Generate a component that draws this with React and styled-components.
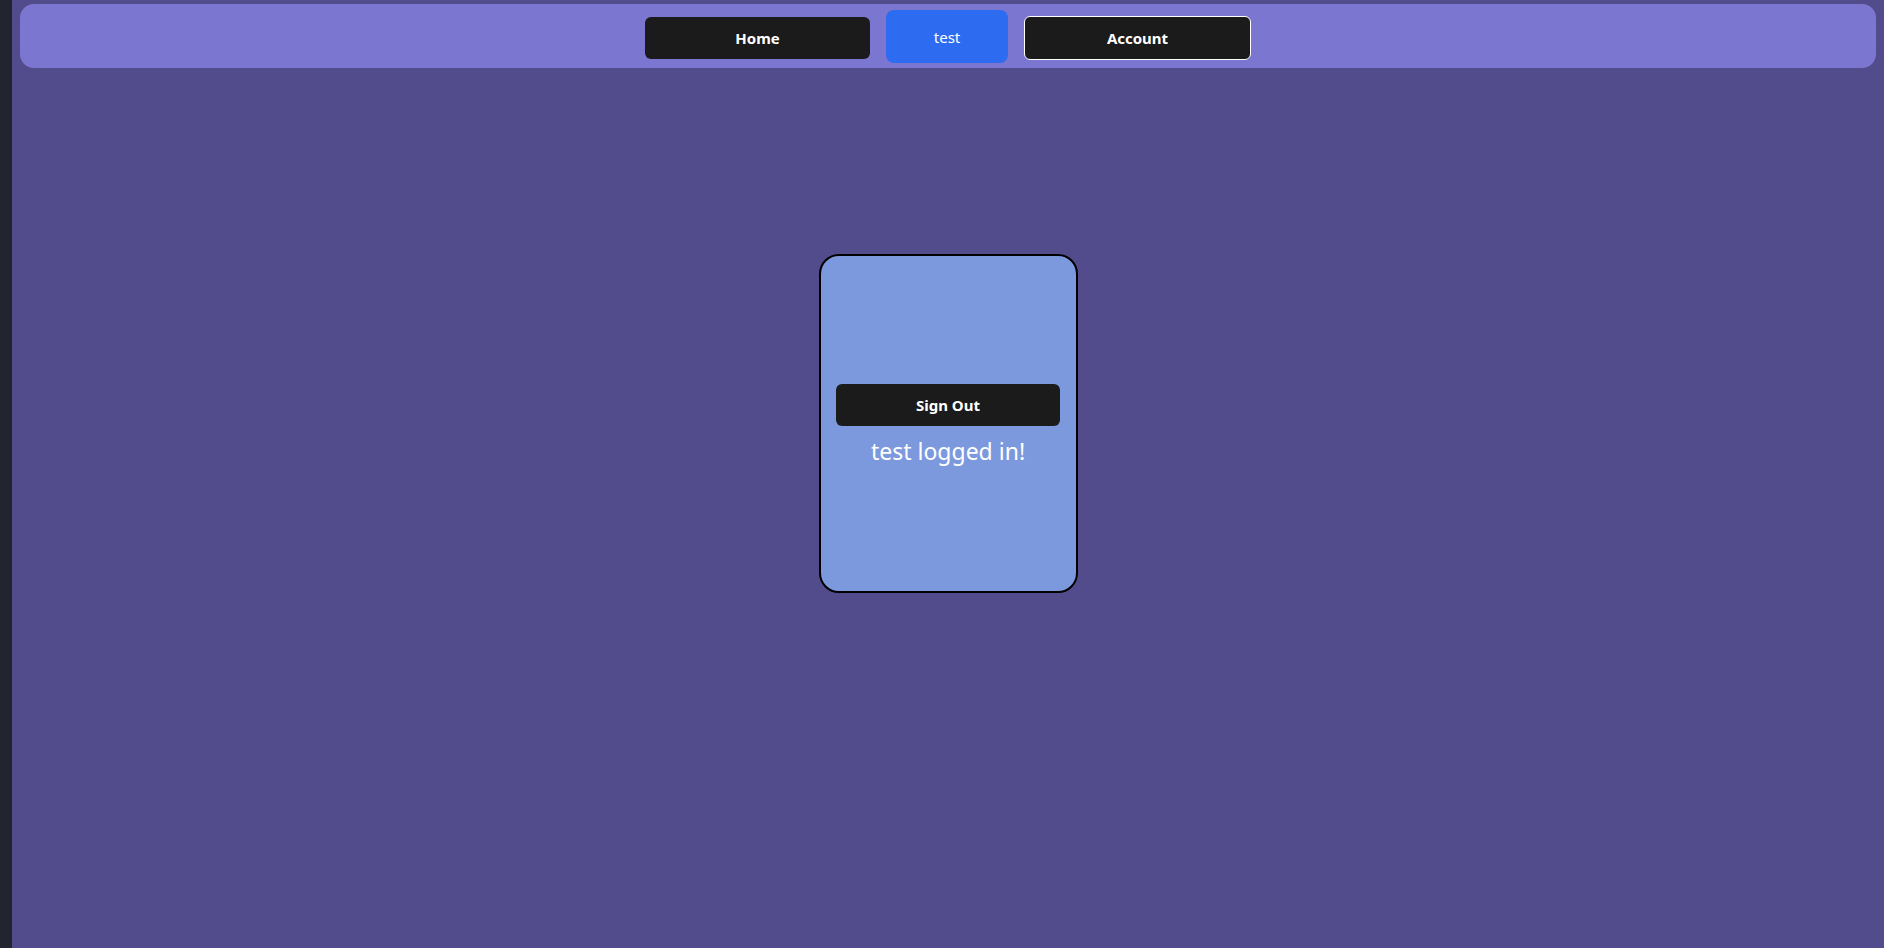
import React from "react";
import styled, { createGlobalStyle } from "styled-components";

const Global = createGlobalStyle`
  html, body { margin: 0; padding: 0; height: 100%; }
  body { font-family: "Noto Sans", "Open Sans", sans-serif; background: #524c8d; }
  #root { height: 100%; }
`;

const Shell = styled.div`
  display: flex;
  height: 948px;
`;

const SideStrip = styled.div`
  width: 12px;
  flex: none;
  background: #22252d;
`;

const Main = styled.main`
  flex: 1;
  display: flex;
  flex-direction: column;
  background: #524c8d;
  padding: 4px 8px 0 8px;
`;

const NavBar = styled.nav`
  height: 64px;
  box-sizing: border-box;
  background: #7b76d0;
  border-radius: 14px;
  display: flex;
  align-items: center;
  justify-content: center;
`;

const NavButton = styled.button`
  box-sizing: border-box;
  width: ${(p) => p.$w}px;
  height: ${(p) => p.$h}px;
  margin: ${(p) => p.$mt || 0}px ${(p) => p.$mx || 0}px 0;
  border-radius: ${(p) => (p.$active ? 8 : 6)}px;
  border: ${(p) => (p.$outlined ? "1px solid #ffffff" : "none")};
  background: ${(p) => (p.$active ? "#2d6cf0" : "#1b1b1b")};
  color: #ffffff;
  font-family: "Noto Sans", sans-serif;
  font-size: 15px;
  font-weight: ${(p) => (p.$active ? 400 : 700)};
  cursor: pointer;
  padding: 0;
`;

const Stage = styled.section`
  display: flex;
  justify-content: center;
  padding-top: 186px;
`;

const Card = styled.div`
  box-sizing: border-box;
  width: 259px;
  height: 339px;
  background: #7d99dd;
  border: 2px solid #000000;
  border-radius: 20px;
  display: flex;
  flex-direction: column;
  align-items: center;
  justify-content: center;
  padding-top: 3px;
`;

const SignOut = styled.button`
  width: 224px;
  height: 42px;
  border: none;
  border-radius: 6px;
  background: #1b1b1b;
  color: #ffffff;
  font-family: "Noto Sans", sans-serif;
  font-size: 15px;
  font-weight: 700;
  cursor: pointer;
`;

const Status = styled.p`
  margin: 10px 0 0;
  color: #ffffff;
  font-family: "Noto Sans", sans-serif;
  font-size: 23px;
  line-height: 30px;
`;

export default function App() {
  return (
    <>
      <Global />
      <Shell>
        <SideStrip />
        <Main>
          <NavBar>
            <NavButton $w={225} $h={42} $mt={4}>Home</NavButton>
            <NavButton $w={122} $h={53} $active $mt={1} $mx={16}>test</NavButton>
            <NavButton $w={227} $h={44} $outlined $mt={4}>Account</NavButton>
          </NavBar>
          <Stage>
            <Card>
              <SignOut>Sign Out</SignOut>
              <Status>test logged in!</Status>
            </Card>
          </Stage>
        </Main>
      </Shell>
    </>
  );
}
